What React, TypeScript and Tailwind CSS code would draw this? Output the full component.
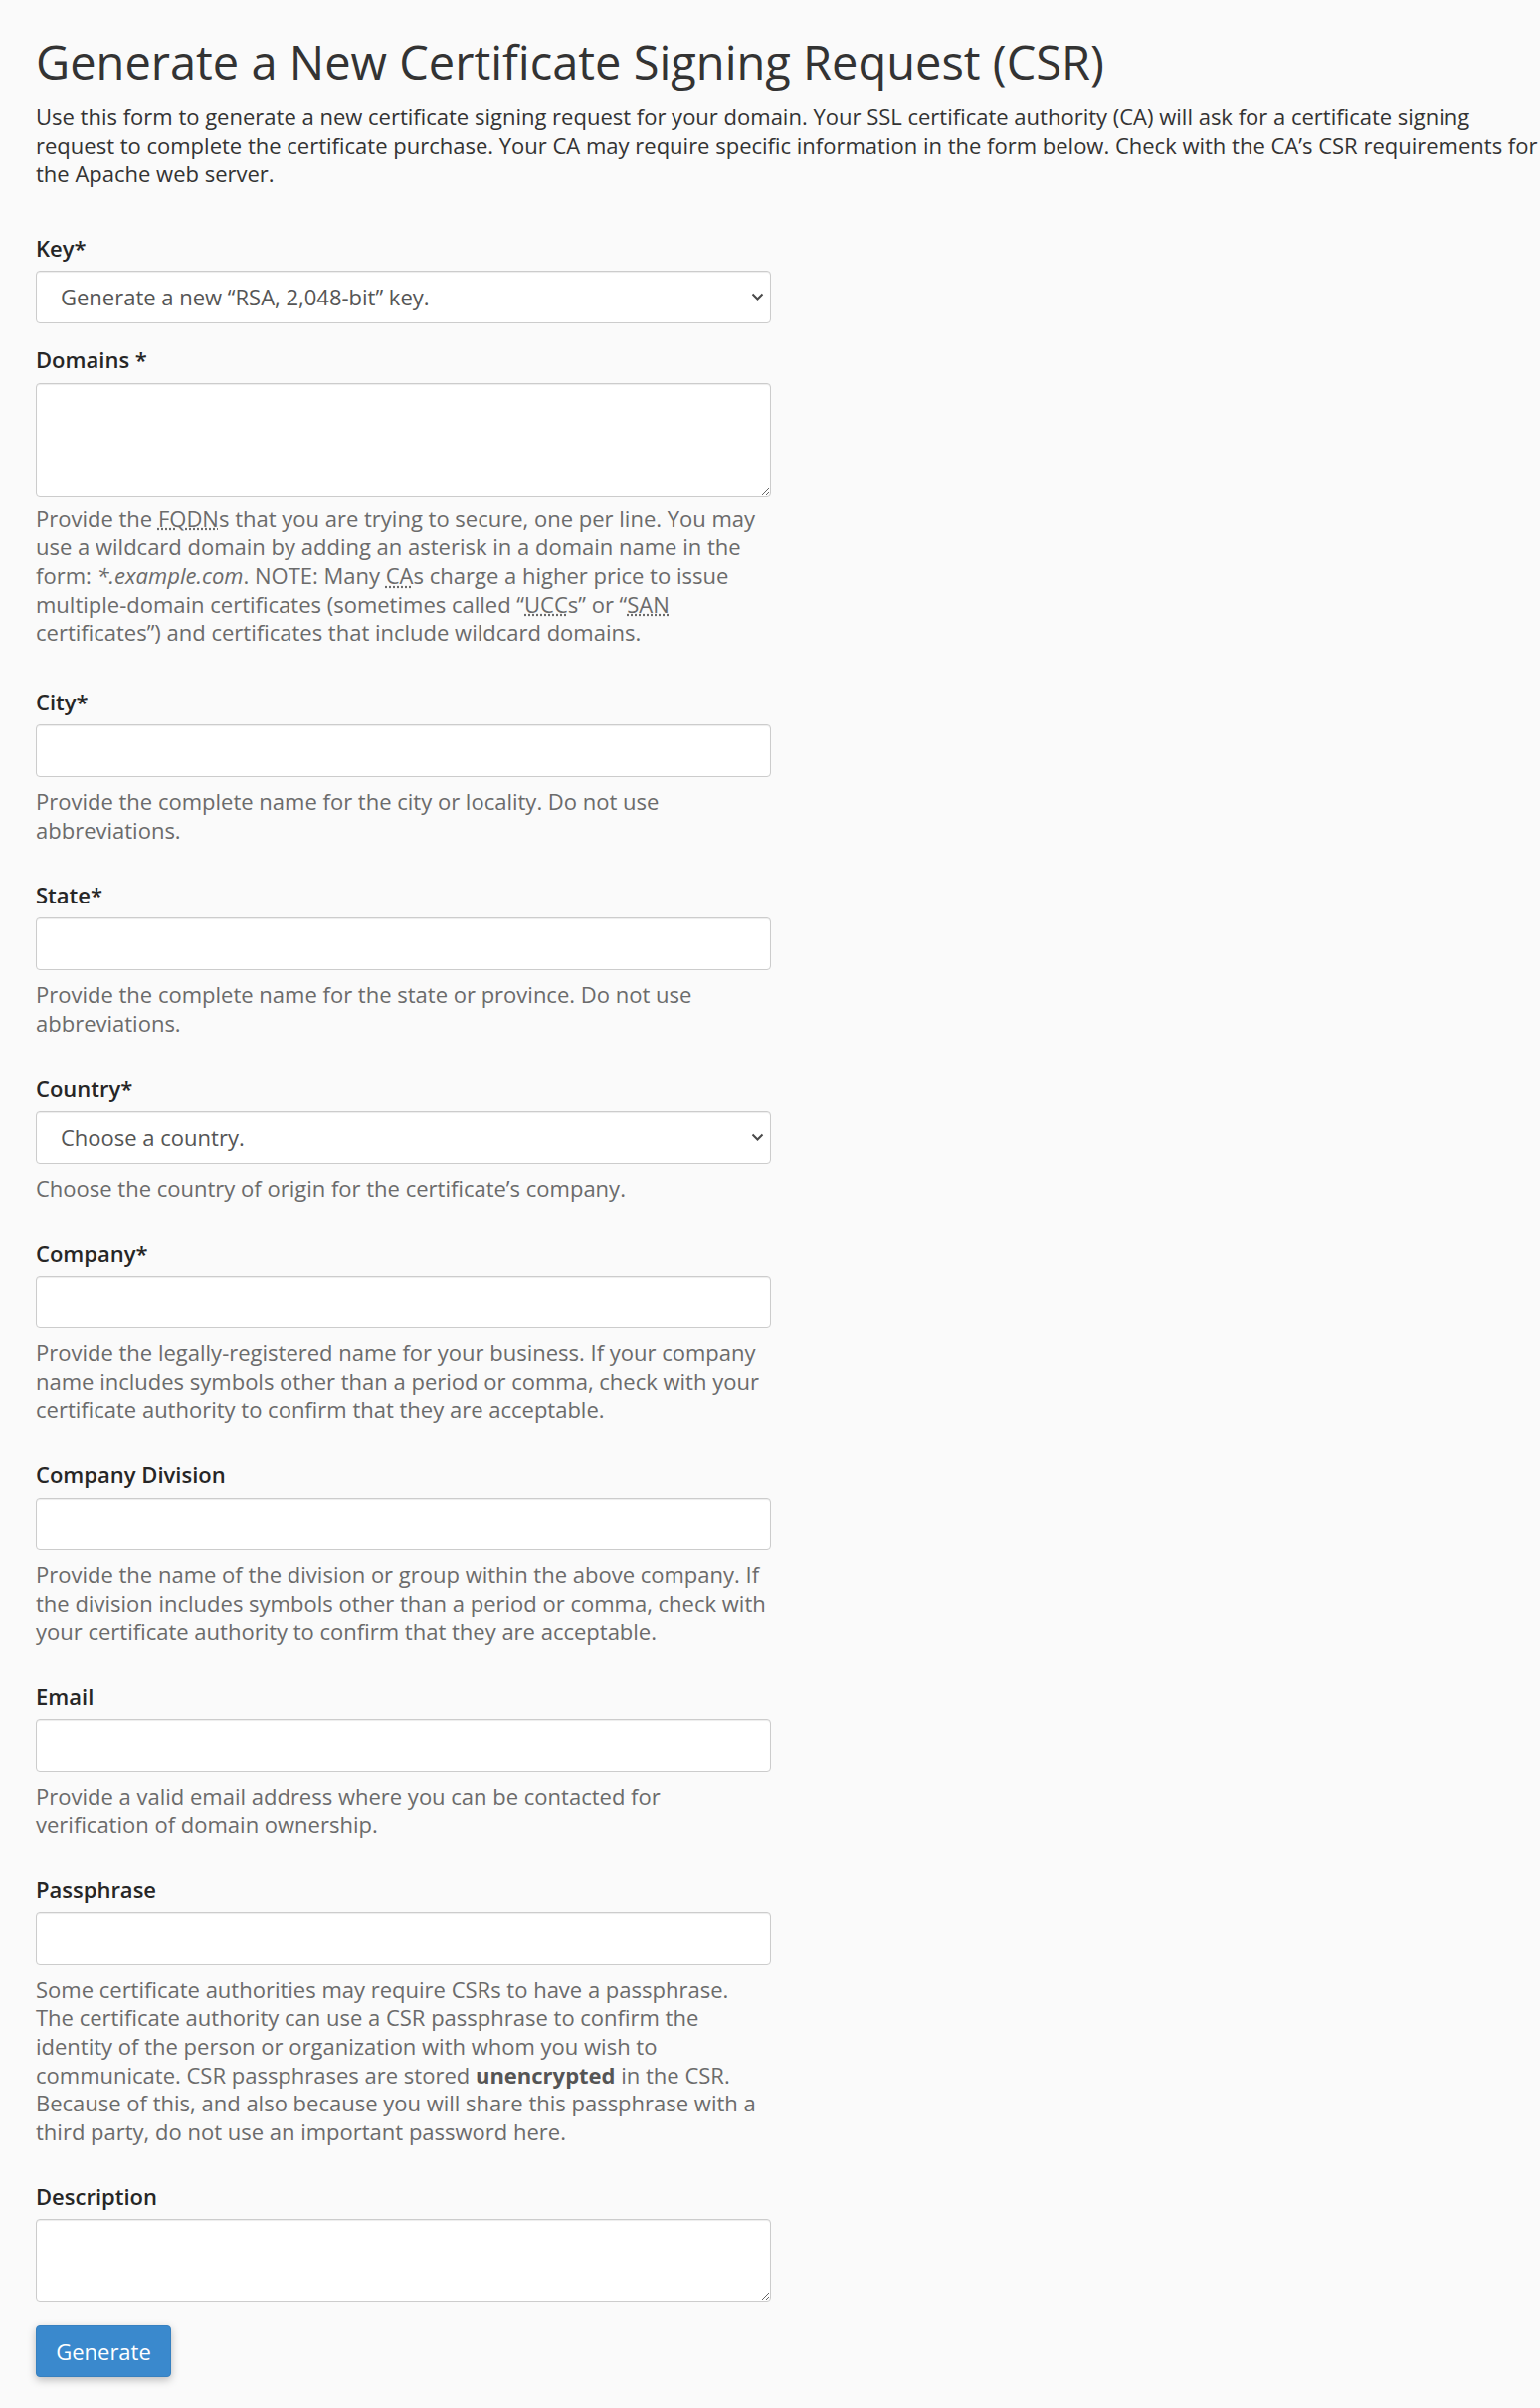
import type { ReactNode } from 'react'

const font = { fontFamily: '"Open Sans", "Liberation Sans", sans-serif' }

function Label({ children }: { children: ReactNode }) {
  return (
    <label className="block mb-[9px] text-[22px] leading-[28.57px] font-semibold text-[#262626]">
      {children}
    </label>
  )
}

function Help({ children, tight }: { children: ReactNode; tight?: boolean }) {
  return (
    <p
      className={`w-[739px] ${tight ? 'mt-[8px] mb-[41px]' : 'mt-[10px] mb-[36.5px]'} text-[22px] leading-[28.57px] text-[#6b6b6b]`}
    >
      {children}
    </p>
  )
}

const fieldClass =
  'block w-[739px] bg-white border border-[#cccccc] rounded-[4px] shadow-[inset_0_1px_1px_rgba(0,0,0,0.075)] text-[22px] text-[#555555] outline-none'

function TextField() {
  return <input type="text" className={`${fieldClass} h-[53px] px-[17px]`} />
}

function Select({ value }: { value: string }) {
  return (
    <div className="relative w-[739px]">
      <select
        className={`${fieldClass} h-[53px] pl-[24px] pr-[40px] appearance-none`}
        defaultValue={value}
      >
        <option>{value}</option>
      </select>
      <svg
        className="absolute right-[7px] top-[22px] pointer-events-none"
        width="13"
        height="9"
        viewBox="0 0 13 9"
        fill="none"
      >
        <path d="M1.5 1.5 L6.5 6.5 L11.5 1.5" stroke="#4a4a4a" strokeWidth="2" />
      </svg>
    </div>
  )
}

export default function App() {
  return (
    <div className="min-h-[2420px] bg-[#fafafa] overflow-hidden" style={font}>
      <div className="pl-[36px] pt-[34px] pb-[30px]">
        <h1 className="text-[47px] leading-[56px] font-normal text-[#333333]">
          Generate a New Certificate Signing Request (CSR)
        </h1>
        <p className="mt-[13px] w-[1518px] text-[22px] leading-[28.57px] text-[#333333]">
          Use this form to generate a new certificate signing request for your domain. Your SSL
          certificate authority (CA) will ask for a certificate signing request to complete the
          certificate purchase. Your CA may require specific information in the form below. Check
          with the CA’s CSR requirements for the Apache web server.
        </p>

        <form className="mt-[46px]">
          <div className="mb-[22px]">
            <Label>Key*</Label>
            <Select value="Generate a new “RSA, 2,048-bit” key." />
          </div>

          <div className="mb-[22px]">
            <Label>Domains *</Label>
            <textarea className={`${fieldClass} h-[114px] px-[17px] py-[8px]`} />
            <Help tight>
              Provide the <abbr title="Fully Qualified Domain Names">FQDN</abbr>s that you are
              trying to secure, one per line. You may use a wildcard domain by adding an asterisk
              in a domain name in the form: <em>*.example.com</em>. NOTE: Many{' '}
              <abbr title="Certificate Authorities">CA</abbr>s charge a higher price to issue
              multiple-domain certificates (sometimes called “
              <abbr title="Unified Communications Certificates">UCC</abbr>s” or “
              <abbr title="Subject Alternative Name">SAN</abbr> certificates”) and certificates
              that include wildcard domains.
            </Help>
          </div>

          <div className="mb-[22px]">
            <Label>City*</Label>
            <TextField />
            <Help>Provide the complete name for the city or locality. Do not use abbreviations.</Help>
          </div>

          <div className="mb-[22px]">
            <Label>State*</Label>
            <TextField />
            <Help>Provide the complete name for the state or province. Do not use abbreviations.</Help>
          </div>

          <div className="mb-[22px]">
            <Label>Country*</Label>
            <Select value="Choose a country." />
            <Help>Choose the country of origin for the certificate’s company.</Help>
          </div>

          <div className="mb-[22px]">
            <Label>Company*</Label>
            <TextField />
            <Help>
              Provide the legally-registered name for your business. If your company name includes
              symbols other than a period or comma, check with your certificate authority to
              confirm that they are acceptable.
            </Help>
          </div>

          <div className="mb-[22px]">
            <Label>Company Division</Label>
            <TextField />
            <Help>
              Provide the name of the division or group within the above company. If the division
              includes symbols other than a period or comma, check with your certificate authority
              to confirm that they are acceptable.
            </Help>
          </div>

          <div className="mb-[22px]">
            <Label>Email</Label>
            <TextField />
            <Help>
              Provide a valid email address where you can be contacted for verification of domain
              ownership.
            </Help>
          </div>

          <div className="mb-[22px]">
            <Label>Passphrase</Label>
            <TextField />
            <Help>
              Some certificate authorities may require CSRs to have a passphrase. The certificate
              authority can use a CSR passphrase to confirm the identity of the person or
              organization with whom you wish to communicate. CSR passphrases are stored{' '}
              <strong className="font-bold text-[#555555]">unencrypted</strong> in the CSR. Because
              of this, and also because you will share this passphrase with a third party, do not
              use an important password here.
            </Help>
          </div>

          <div className="mb-[24px]">
            <Label>Description</Label>
            <textarea className={`${fieldClass} h-[83px] px-[17px] py-[8px]`} />
          </div>

          <button
            type="button"
            className="h-[52px] w-[136px] rounded-[4px] bg-[#3a89cd] border border-[#3680c0] text-white text-[22px] shadow-[0_3px_8px_rgba(0,0,0,0.25)]"
          >
            Generate
          </button>
        </form>
      </div>
    </div>
  )
}
